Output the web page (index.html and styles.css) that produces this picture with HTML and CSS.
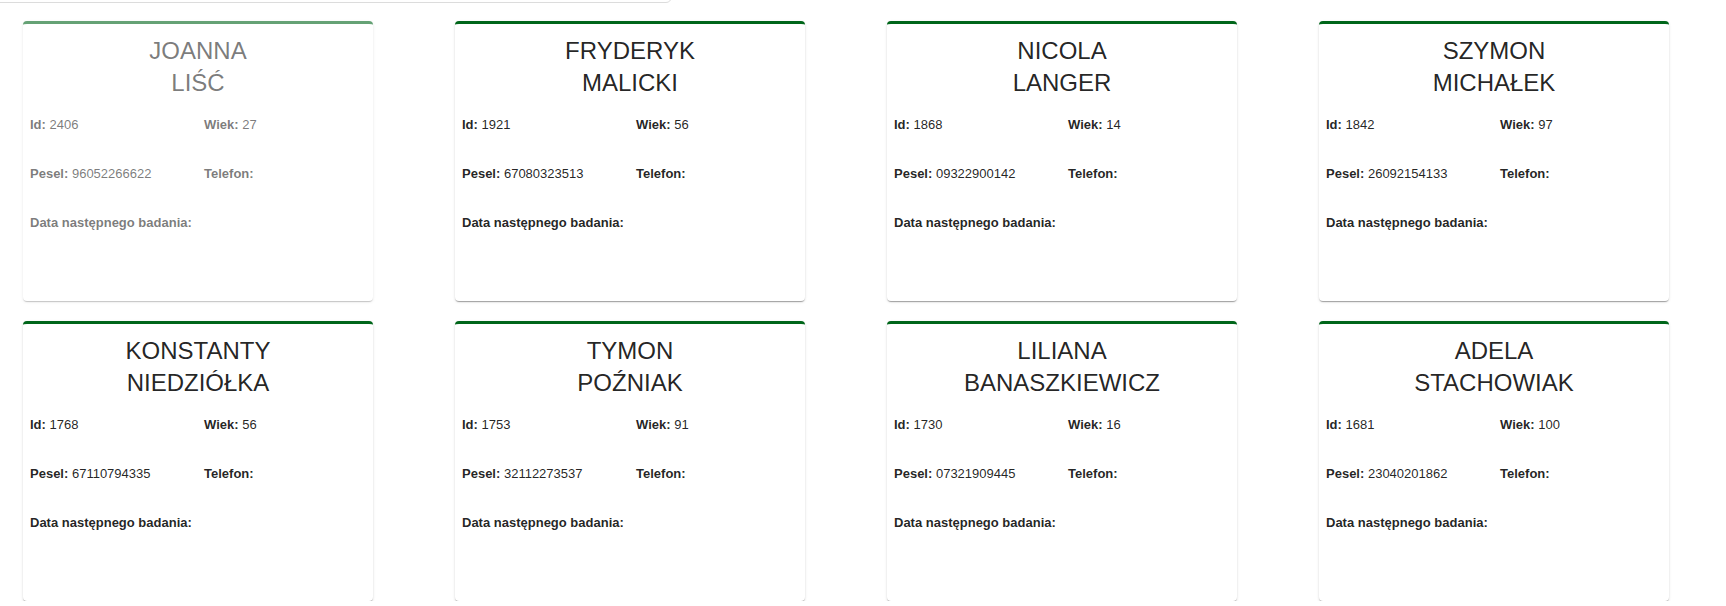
FILE: index.html
```html
<!DOCTYPE html>
<html lang="pl">
<head>
<meta charset="utf-8">
<title>Pacjenci</title>
<link rel="stylesheet" href="styles.css">
</head>
<body>
<div class="search"></div>
<main class="grid">
  <article class="card card--inactive">
    <h2 class="name">JOANNA<br>LIŚĆ</h2>
    <div class="details">
      <p><b>Id:</b> 2406</p><p><b>Wiek:</b> 27</p>
      <p><b>Pesel:</b> 96052266622</p><p><b>Telefon:</b></p>
      <p class="wide"><b>Data następnego badania:</b></p>
    </div>
  </article>
  <article class="card">
    <h2 class="name">FRYDERYK<br>MALICKI</h2>
    <div class="details">
      <p><b>Id:</b> 1921</p><p><b>Wiek:</b> 56</p>
      <p><b>Pesel:</b> 67080323513</p><p><b>Telefon:</b></p>
      <p class="wide"><b>Data następnego badania:</b></p>
    </div>
  </article>
  <article class="card">
    <h2 class="name">NICOLA<br>LANGER</h2>
    <div class="details">
      <p><b>Id:</b> 1868</p><p><b>Wiek:</b> 14</p>
      <p><b>Pesel:</b> 09322900142</p><p><b>Telefon:</b></p>
      <p class="wide"><b>Data następnego badania:</b></p>
    </div>
  </article>
  <article class="card">
    <h2 class="name">SZYMON<br>MICHAŁEK</h2>
    <div class="details">
      <p><b>Id:</b> 1842</p><p><b>Wiek:</b> 97</p>
      <p><b>Pesel:</b> 26092154133</p><p><b>Telefon:</b></p>
      <p class="wide"><b>Data następnego badania:</b></p>
    </div>
  </article>
  <article class="card">
    <h2 class="name">KONSTANTY<br>NIEDZIÓŁKA</h2>
    <div class="details">
      <p><b>Id:</b> 1768</p><p><b>Wiek:</b> 56</p>
      <p><b>Pesel:</b> 67110794335</p><p><b>Telefon:</b></p>
      <p class="wide"><b>Data następnego badania:</b></p>
    </div>
  </article>
  <article class="card">
    <h2 class="name">TYMON<br>POŹNIAK</h2>
    <div class="details">
      <p><b>Id:</b> 1753</p><p><b>Wiek:</b> 91</p>
      <p><b>Pesel:</b> 32112273537</p><p><b>Telefon:</b></p>
      <p class="wide"><b>Data następnego badania:</b></p>
    </div>
  </article>
  <article class="card">
    <h2 class="name">LILIANA<br>BANASZKIEWICZ</h2>
    <div class="details">
      <p><b>Id:</b> 1730</p><p><b>Wiek:</b> 16</p>
      <p><b>Pesel:</b> 07321909445</p><p><b>Telefon:</b></p>
      <p class="wide"><b>Data następnego badania:</b></p>
    </div>
  </article>
  <article class="card">
    <h2 class="name">ADELA<br>STACHOWIAK</h2>
    <div class="details">
      <p><b>Id:</b> 1681</p><p><b>Wiek:</b> 100</p>
      <p><b>Pesel:</b> 23040201862</p><p><b>Telefon:</b></p>
      <p class="wide"><b>Data następnego badania:</b></p>
    </div>
  </article>
</main>
</body>
</html>
```
FILE: styles.css
```css
html, body {
  margin: 0;
  padding: 0;
  background: #fff;
}
body {
  font-family: "Liberation Sans", Arial, sans-serif;
  color: rgba(0, 0, 0, 0.87);
  overflow: hidden;
}
.search {
  width: 682px;
  height: 40px;
  margin: -37px 0 0 -10px;
  border: 1px solid #dcdcdc;
  border-radius: 6px;
  box-sizing: border-box;
}
.grid {
  display: grid;
  grid-template-columns: repeat(4, 350px);
  column-gap: 82px;
  row-gap: 20px;
  padding: 0 0 0 23px;
  margin-top: 18px;
}
.card {
  height: 280px;
  box-sizing: border-box;
  background: #fff;
  border-top: 3px solid #00661a;
  border-radius: 4px;
  box-shadow: 0 2px 1px -1px rgba(0,0,0,0.2), 0 1px 1px 0 rgba(0,0,0,0.14), 0 1px 3px 0 rgba(0,0,0,0.12);
  padding: 11px 7px 0 7px;
}
.card--inactive {
  opacity: 0.6;
}
.name {
  margin: 0;
  font-size: 24px;
  font-weight: 400;
  line-height: 32px;
  text-align: center;
}
.details {
  display: grid;
  grid-template-columns: 174px 1fr;
  row-gap: 29px;
  margin-top: 16px;
  font-size: 13px;
  line-height: 20px;
}
.details p {
  margin: 0;
}
.details b {
  font-weight: 700;
}
.details .wide {
  grid-column: 1 / -1;
}
```
